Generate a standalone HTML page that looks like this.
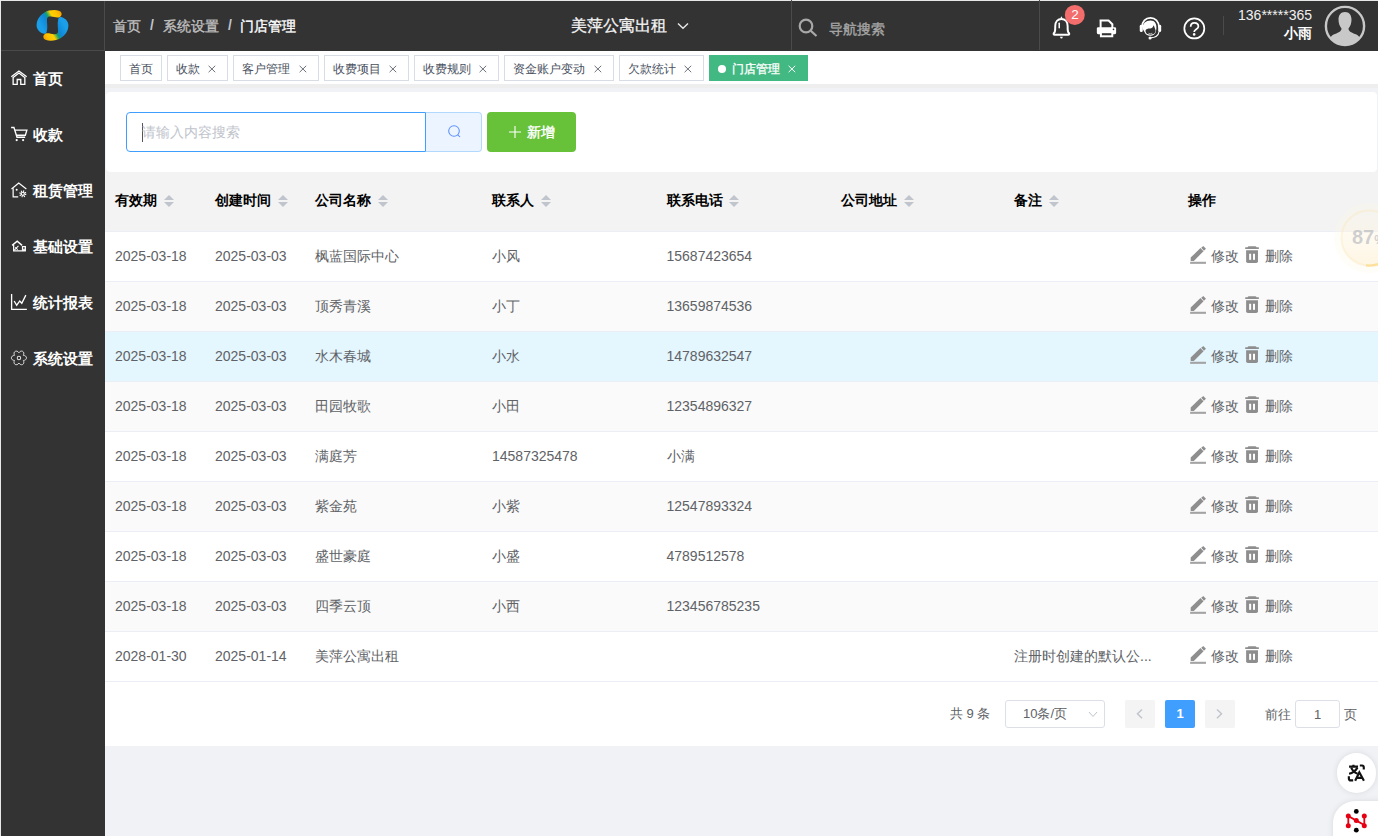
<!DOCTYPE html><html><head><meta charset="utf-8"><style>
*{margin:0;padding:0;box-sizing:border-box}
html,body{width:1378px;height:836px;overflow:hidden;background:#f0f2f5;font-family:"Liberation Sans",sans-serif;font-size:14px;color:#606266}
#f{position:absolute;left:0;top:0;width:1378px;height:836px;overflow:hidden}
.a{position:absolute;white-space:nowrap}
.t{position:absolute;white-space:nowrap;line-height:20px;height:20px}
svg{position:absolute;overflow:visible}
.tab{position:absolute;top:55px;height:26px;border:1px solid #d8dce5;background:#fff;color:#495060;font-size:12px;line-height:24px;white-space:nowrap}
.tab span{position:absolute;top:.75px;left:8px}
.th{position:absolute;color:#000;font-weight:bold;font-size:14px;white-space:nowrap;line-height:20px;top:190px}
.car{position:absolute;width:0;height:0;border:5px solid transparent}
.row{position:absolute;left:105px;width:1273px;height:50px;border-bottom:1px solid #ebeef5;background:#fff}
.row.s{background:#fafafa}
.row.h{background:#e4f6fe}
.td{position:absolute;top:14px;line-height:20px;white-space:nowrap;font-size:14px;color:#606266}
</style></head><body><div id="f">
<div class="a" style="left:0;top:0;width:105px;height:836px;background:#333"></div>
<div class="a" style="left:0;top:0;width:1378px;height:51px;background:#333"></div>
<div class="a" style="left:0;top:50px;width:105px;height:1px;background:#4a4a4a"></div>
<div class="a" style="left:104px;top:0;width:1px;height:50px;background:#4a4a4a"></div>
<div class="a" style="left:0;top:0;width:1378px;height:1px;background:#e8e8e8"></div>
<div class="a" style="left:0;top:0;width:1px;height:836px;background:#e8e8e8"></div>
<svg style="left:0;top:0" width="105" height="50" viewBox="0 0 105 50">
<defs>
<linearGradient id="ga" gradientUnits="userSpaceOnUse" x1="40" y1="24" x2="62" y2="12"><stop offset="0" stop-color="#1a9fe8"/><stop offset=".3" stop-color="#0f86d6"/><stop offset=".42" stop-color="#12a070"/><stop offset=".58" stop-color="#ffd000"/><stop offset=".8" stop-color="#fcc000"/><stop offset="1" stop-color="#f39800"/></linearGradient>
<linearGradient id="gb2" gradientUnits="userSpaceOnUse" x1="40" y1="24" x2="62" y2="12"><stop offset="0" stop-color="#0a62b8"/><stop offset=".3" stop-color="#1a9ce6"/><stop offset=".42" stop-color="#12a070"/><stop offset=".58" stop-color="#ffd000"/><stop offset=".8" stop-color="#fcc000"/><stop offset="1" stop-color="#f39800"/></linearGradient>
</defs>
<g id="hA"><path d="M44 33.8 C39 32.5 36.4 28.8 36.6 25 C36.8 20 39.5 15.5 44.5 12.5 C48.5 10 55.5 9.4 59.5 11 C62.2 12.2 62.3 15.6 60 16.9 C57.5 18.2 54 16.8 51 16.5 C49 16.3 47.3 16.8 47 18.7 C46.7 22 47.9 27 46.9 31 C46.5 33 45.6 34.1 44 33.8 Z" fill="url(#ga)"/></g>
<path transform="rotate(180 52.5 25.4)" d="M44 33.8 C39 32.5 36.4 28.8 36.6 25 C36.8 20 39.5 15.5 44.5 12.5 C48.5 10 55.5 9.4 59.5 11 C62.2 12.2 62.3 15.6 60 16.9 C57.5 18.2 54 16.8 51 16.5 C49 16.3 47.3 16.8 47 18.7 C46.7 22 47.9 27 46.9 31 C46.5 33 45.6 34.1 44 33.8 Z" fill="url(#ga)"/>
</svg>
<div class="t" style="left:32.6px;top:69px;color:#fff;font-size:15px;font-weight:bold">首页</div>
<div class="t" style="left:32.6px;top:125px;color:#fff;font-size:15px;font-weight:bold">收款</div>
<div class="t" style="left:32.6px;top:181px;color:#fff;font-size:15px;font-weight:bold">租赁管理</div>
<div class="t" style="left:32.6px;top:237px;color:#fff;font-size:15px;font-weight:bold">基础设置</div>
<div class="t" style="left:32.6px;top:293px;color:#fff;font-size:15px;font-weight:bold">统计报表</div>
<div class="t" style="left:32.6px;top:349px;color:#fff;font-size:15px;font-weight:bold">系统设置</div>
<svg style="left:5px;top:60px" width="30" height="85" viewBox="0 0 295 836" fill="none" stroke="#fff" stroke-width="13">
<path d="M62 165 L137 108 L213 165"/><path d="M80 172 L137 128 L194 172"/>
<path d="M80 168 V240 H120 V192 H155 V240 H195 V168"/>
<path d="M60 664 H88 L118 760 H198"/><path d="M96 690 H215 L200 740 H110"/>
<circle cx="115" cy="788" r="11" fill="#fff" stroke="none"/><circle cx="178" cy="788" r="11" fill="#fff" stroke="none"/>
</svg>
<svg style="left:5px;top:175px" width="30" height="85" viewBox="0 0 295 836" fill="none" stroke="#fff" stroke-width="12">
<path d="M64 137 L135 80 L210 137"/><path d="M80 130 V215 H130"/><circle cx="115" cy="145" r="10" fill="#fff" stroke="none"/>
<circle cx="175" cy="185" r="26" stroke-width="18" stroke-dasharray="10 10.4"/><circle cx="175" cy="185" r="15" stroke-width="11"/>
<path d="M70 692 L120 652 L168 692" stroke-width="14"/><path d="M85 688 V746 H205"/>
<path d="M92 738 L132 698 M100 712 L125 735" stroke-width="10"/>
<rect x="166" y="698" width="40" height="48" fill="#fff" stroke="none"/><rect x="180" y="708" width="12" height="22" fill="#333" stroke="none"/>
</svg>
<svg style="left:5px;top:290px" width="30" height="85" viewBox="0 0 295 836" fill="none" stroke="#fff" stroke-width="13">
<path d="M65 40 V190 H215"/><path d="M90 108 L115 150 L145 108 L165 130 L205 50" stroke-linejoin="miter"/>
<path d="M180.3 643.0 C221.6 643.7 221.6 692.3 180.3 693.0 C200.3 729.1 158.3 753.4 137.0 718.0 C115.7 753.4 73.7 729.1 93.7 693.0 C52.4 692.3 52.4 643.7 93.7 643.0 C73.7 606.9 115.7 582.6 137.0 618.0 C158.3 582.6 200.3 606.9 180.3 643.0 Z" stroke="#e0e0e0" stroke-width="9" stroke-linejoin="round"/><circle cx="137" cy="668" r="17" stroke="#e0e0e0" stroke-width="10"/>
</svg>
<div class="t" style="left:113px;top:15.5px;color:#bfbfbf;-webkit-text-stroke:.35px #bfbfbf">首页</div>
<div class="t" style="left:150px;top:15px;color:#c0c4cc;font-weight:bold">/</div>
<div class="t" style="left:163px;top:15.5px;color:#bfbfbf;-webkit-text-stroke:.35px #bfbfbf">系统设置</div>
<div class="t" style="left:228px;top:15px;color:#c0c4cc;font-weight:bold">/</div>
<div class="t" style="left:240px;top:15.5px;color:#fff;-webkit-text-stroke:.35px #fff">门店管理</div>
<div class="t" style="left:571px;top:15.5px;color:#f4f4f4;font-size:16px;-webkit-text-stroke:.3px #f4f4f4">美萍公寓出租</div>
<svg style="left:677px;top:22px" width="12" height="8" viewBox="0 0 12 8" fill="none" stroke="#e8e8e8" stroke-width="1.4"><path d="M1 1.5 L6 6.3 L11 1.5"/></svg>
<div class="a" style="left:791px;top:0;width:1px;height:50px;background:#4a4a4a"></div>
<svg style="left:798px;top:18px" width="20" height="19" viewBox="0 0 20 19" fill="none" stroke="#a8a8a8" stroke-width="2.2"><circle cx="8" cy="8" r="6.3"/><path d="M12.6 12.6 L18.5 18"/></svg>
<div class="t" style="left:829px;top:19px;color:#a6a6a6;-webkit-text-stroke:.35px #a6a6a6">导航搜索</div>
<div class="a" style="left:1039px;top:0;width:1px;height:50px;background:#4a4a4a"></div>
<svg style="left:1045px;top:3px" width="80" height="42" viewBox="0 0 1378 723">
<path d="M165 545 Q148 545 148 533 Q148 522 162 508 C178 490 176 470 176 400 C176 322 222 275 283 275 C344 275 390 322 390 400 C390 470 388 490 404 508 Q418 522 418 533 Q418 545 401 545 Z" fill="none" stroke="#fff" stroke-width="34" stroke-linejoin="round"/>
<path d="M283 228 L262 268 H304Z" fill="#fff"/>
<path d="M245 350 V425" stroke="#fff" stroke-width="26" stroke-linecap="round"/>
<path d="M258 580 H308 Q300 612 283 612 Q266 612 258 580Z" fill="#fff"/>
<circle cx="513" cy="205" r="172" fill="#f36d6d"/>
<path d="M940 300 H1095 L1160 365 V440 M958 300 V440" fill="none" stroke="#fff" stroke-width="34"/>
<rect x="893" y="418" width="332" height="118" rx="22" fill="#fff"/>
<circle cx="1180" cy="455" r="14" fill="#333"/>
<rect x="963" y="503" width="196" height="70" fill="#333" stroke="#fff" stroke-width="34"/>
</svg>
<div class="a" style="left:1065px;top:5px;width:20px;height:20px;color:#fff;font-size:13.5px;line-height:20px;text-align:center">2</div>
<svg style="left:1130px;top:10px" width="80" height="35" viewBox="0 0 1378 603">
<path d="M205 300 C205 195 270 135 352 135 C434 135 500 195 500 300" fill="none" stroke="#fff" stroke-width="30"/>
<path d="M215 320 C215 230 275 182 352 182 C430 182 460 240 455 320 L445 380 C430 420 395 445 352 445 C300 445 262 420 250 380Z" fill="#fff"/>
<path d="M268 350 C275 325 305 318 345 318 C375 318 395 305 405 262 C420 285 432 320 440 350 C445 395 410 425 352 425 C295 425 262 395 268 350Z" fill="#333"/>
<path d="M318 400 Q350 418 385 400" fill="none" stroke="#fff" stroke-width="10"/>
<rect x="168" y="255" width="52" height="125" rx="24" fill="#fff"/>
<rect x="485" y="255" width="52" height="125" rx="24" fill="#fff"/>
<path d="M500 375 C490 440 430 478 350 480" fill="none" stroke="#fff" stroke-width="20"/>
<circle cx="345" cy="482" r="26" fill="#fff"/>
<circle cx="1108" cy="318" r="172" fill="none" stroke="#fff" stroke-width="30"/>
<path d="M1045 290 C1045 245 1075 222 1110 222 C1150 222 1178 248 1178 285 C1178 330 1105 335 1105 380" fill="none" stroke="#fff" stroke-width="30"/>
<circle cx="1105" cy="420" r="22" fill="#fff"/>
</svg>
<div class="a" style="left:1223px;top:16px;width:1px;height:19px;background:#4a4a4a"></div>
<div class="t" style="right:66px;top:5px;color:#f0f0f0;font-size:14px;text-align:right">136*****365</div>
<div class="t" style="right:66px;top:23px;color:#fff;font-size:14px;font-weight:bold;text-align:right">小雨</div>
<svg style="left:1324px;top:5px" width="42" height="42" viewBox="0 0 42 42">
<defs><clipPath id="cp"><circle cx="21" cy="21" r="19.5"/></clipPath></defs>
<circle cx="21" cy="21" r="19.1" fill="none" stroke="#c8c8c8" stroke-width="2.4"/>
<g clip-path="url(#cp)" fill="#c8c8c8"><path d="M21 7 C25.5 7 27.5 10.5 27.5 14.5 C27.5 18 26.5 21 24.5 23.5 C24.5 26 27 27.5 31 29 C35 30.5 37 33 37 38 V42 H5 V38 C5 33 7 30.5 11 29 C15 27.5 17.5 26 17.5 23.5 C15.5 21 14.5 18 14.5 14.5 C14.5 10.5 16.5 7 21 7Z"/></g></svg>
<div class="a" style="left:105px;top:84px;width:1273px;height:4px;background:#eeeeee"></div>
<div class="a" style="left:105px;top:51px;width:1273px;height:33px;background:#fff"></div>
<div class="tab" style="left:120px;width:42px"><span>首页</span></div>
<div class="tab" style="left:167px;width:61px"><span>收款</span></div>
<svg style="left:207.5px;top:65px" width="8" height="8" viewBox="0 0 8 8" fill="none" stroke="#6b707b" stroke-width="1"><path d="M.6 .8 L7.2 7.2 M7.2 .8 L.6 7.2"/></svg>
<div class="tab" style="left:233px;width:86px"><span>客户管理</span></div>
<svg style="left:298.5px;top:65px" width="8" height="8" viewBox="0 0 8 8" fill="none" stroke="#6b707b" stroke-width="1"><path d="M.6 .8 L7.2 7.2 M7.2 .8 L.6 7.2"/></svg>
<div class="tab" style="left:324px;width:85px"><span>收费项目</span></div>
<svg style="left:388.5px;top:65px" width="8" height="8" viewBox="0 0 8 8" fill="none" stroke="#6b707b" stroke-width="1"><path d="M.6 .8 L7.2 7.2 M7.2 .8 L.6 7.2"/></svg>
<div class="tab" style="left:414px;width:85px"><span>收费规则</span></div>
<svg style="left:478.5px;top:65px" width="8" height="8" viewBox="0 0 8 8" fill="none" stroke="#6b707b" stroke-width="1"><path d="M.6 .8 L7.2 7.2 M7.2 .8 L.6 7.2"/></svg>
<div class="tab" style="left:504px;width:110px"><span>资金账户变动</span></div>
<svg style="left:593.5px;top:65px" width="8" height="8" viewBox="0 0 8 8" fill="none" stroke="#6b707b" stroke-width="1"><path d="M.6 .8 L7.2 7.2 M7.2 .8 L.6 7.2"/></svg>
<div class="tab" style="left:619px;width:85px"><span>欠款统计</span></div>
<svg style="left:683.5px;top:65px" width="8" height="8" viewBox="0 0 8 8" fill="none" stroke="#6b707b" stroke-width="1"><path d="M.6 .8 L7.2 7.2 M7.2 .8 L.6 7.2"/></svg>
<div class="tab" style="left:709px;width:99px;background:#42b983;border-color:#42b983;color:#fff"><span style="left:21.5px;-webkit-text-stroke:.3px #fff">门店管理</span></div>
<div class="a" style="left:718px;top:65px;width:8px;height:8px;border-radius:50%;background:#fff"></div>
<svg style="left:787.5px;top:65px" width="8" height="8" viewBox="0 0 8 8" fill="none" stroke="#fff" stroke-width="1"><path d="M.6 .8 L7.2 7.2 M7.2 .8 L.6 7.2"/></svg>
<div class="a" style="left:106px;top:92px;width:1271px;height:80px;background:#fff;border-radius:4px"></div>
<div class="a" style="left:126px;top:112px;width:300px;height:40px;border:1px solid #409eff;border-radius:4px 0 0 4px;background:#fff"></div>
<div class="a" style="left:142px;top:123px;width:1px;height:19px;background:#555"></div>
<div class="t" style="left:142px;top:122px;color:#c0c4cc;font-size:14px">请输入内容搜索</div>
<div class="a" style="left:425px;top:112px;width:57px;height:40px;border:1px solid #b3d8ff;border-left:1px solid #409eff;border-radius:0 4px 4px 0;background:#ecf5ff"></div>
<svg style="left:447px;top:124px" width="15" height="15" viewBox="0 0 15 15" fill="none" stroke="#5a8cff" stroke-width="1.05"><circle cx="7" cy="7" r="5.3"/><path d="M10.8 10.8 L13 13"/></svg>
<div class="a" style="left:487px;top:112px;width:89px;height:40px;border-radius:4px;background:#67c23a"></div>
<svg style="left:509px;top:126px" width="12" height="12" viewBox="0 0 12 12" fill="none" stroke="#fff" stroke-width="1.1"><path d="M6 0 V12 M0 6 H12"/></svg>
<div class="t" style="left:527px;top:122px;color:#fff;font-size:14px;-webkit-text-stroke:.4px #fff">新增</div>
<div class="a" style="left:105px;top:172px;width:1273px;height:60px;background:#f3f3f3;border-bottom:1px solid #ebeef5"></div>
<div class="th" style="left:115px">有效期</div>
<div class="car" style="left:163.5px;top:190px;border-bottom-color:#c0c4cc"></div>
<div class="car" style="left:163.5px;top:202px;border-top-color:#c0c4cc"></div>
<div class="th" style="left:215px">创建时间</div>
<div class="car" style="left:277.5px;top:190px;border-bottom-color:#c0c4cc"></div>
<div class="car" style="left:277.5px;top:202px;border-top-color:#c0c4cc"></div>
<div class="th" style="left:315px">公司名称</div>
<div class="car" style="left:377.5px;top:190px;border-bottom-color:#c0c4cc"></div>
<div class="car" style="left:377.5px;top:202px;border-top-color:#c0c4cc"></div>
<div class="th" style="left:492px">联系人</div>
<div class="car" style="left:540.5px;top:190px;border-bottom-color:#c0c4cc"></div>
<div class="car" style="left:540.5px;top:202px;border-top-color:#c0c4cc"></div>
<div class="th" style="left:666.5px">联系电话</div>
<div class="car" style="left:729.0px;top:190px;border-bottom-color:#c0c4cc"></div>
<div class="car" style="left:729.0px;top:202px;border-top-color:#c0c4cc"></div>
<div class="th" style="left:841px">公司地址</div>
<div class="car" style="left:903.5px;top:190px;border-bottom-color:#c0c4cc"></div>
<div class="car" style="left:903.5px;top:202px;border-top-color:#c0c4cc"></div>
<div class="th" style="left:1014px">备注</div>
<div class="car" style="left:1048.5px;top:190px;border-bottom-color:#c0c4cc"></div>
<div class="car" style="left:1048.5px;top:202px;border-top-color:#c0c4cc"></div>
<div class="th" style="left:1188px">操作</div>
<div class="row" style="top:232px"></div>
<div class="td" style="left:115px;top:246px">2025-03-18</div>
<div class="td" style="left:215px;top:246px">2025-03-03</div>
<div class="td" style="left:315px;top:246px">枫蓝国际中心</div>
<div class="td" style="left:492px;top:246px">小风</div>
<div class="td" style="left:666.5px;top:246px">15687423654</div>
<svg style="left:1186px;top:243px" width="76" height="25" viewBox="0 0 1378 453">
<path d="M85 325 L85 265 L262 92 L318 148 L142 325 Z" fill="#8e8e8e"/><path d="M276 88 L314 54 L362 106 L326 142 Z" fill="#8e8e8e"/>
<rect x="75" y="340" width="287" height="38" fill="#a3a3a3"/>
<path d="M1118 75 Q1120 58 1140 58 H1255 Q1275 58 1278 75 H1310 Q1325 75 1325 92 Q1325 110 1310 110 H1085 Q1070 110 1070 92 Q1070 75 1085 75Z" fill="#8e8e8e"/>
<path d="M1090 130 H1305 V330 Q1305 362 1273 362 H1122 Q1090 362 1090 330Z" fill="#8e8e8e"/>
<rect x="1145" y="195" width="36" height="110" fill="#fff"/><rect x="1215" y="195" width="36" height="110" fill="#fff"/>
</svg>
<div class="td" style="left:1211px;top:246px">修改</div>
<div class="td" style="left:1265px;top:246px">删除</div>
<div class="row s" style="top:282px"></div>
<div class="td" style="left:115px;top:296px">2025-03-18</div>
<div class="td" style="left:215px;top:296px">2025-03-03</div>
<div class="td" style="left:315px;top:296px">顶秀青溪</div>
<div class="td" style="left:492px;top:296px">小丁</div>
<div class="td" style="left:666.5px;top:296px">13659874536</div>
<svg style="left:1186px;top:293px" width="76" height="25" viewBox="0 0 1378 453">
<path d="M85 325 L85 265 L262 92 L318 148 L142 325 Z" fill="#8e8e8e"/><path d="M276 88 L314 54 L362 106 L326 142 Z" fill="#8e8e8e"/>
<rect x="75" y="340" width="287" height="38" fill="#a3a3a3"/>
<path d="M1118 75 Q1120 58 1140 58 H1255 Q1275 58 1278 75 H1310 Q1325 75 1325 92 Q1325 110 1310 110 H1085 Q1070 110 1070 92 Q1070 75 1085 75Z" fill="#8e8e8e"/>
<path d="M1090 130 H1305 V330 Q1305 362 1273 362 H1122 Q1090 362 1090 330Z" fill="#8e8e8e"/>
<rect x="1145" y="195" width="36" height="110" fill="#fff"/><rect x="1215" y="195" width="36" height="110" fill="#fff"/>
</svg>
<div class="td" style="left:1211px;top:296px">修改</div>
<div class="td" style="left:1265px;top:296px">删除</div>
<div class="row h" style="top:332px"></div>
<div class="td" style="left:115px;top:346px">2025-03-18</div>
<div class="td" style="left:215px;top:346px">2025-03-03</div>
<div class="td" style="left:315px;top:346px">水木春城</div>
<div class="td" style="left:492px;top:346px">小水</div>
<div class="td" style="left:666.5px;top:346px">14789632547</div>
<svg style="left:1186px;top:343px" width="76" height="25" viewBox="0 0 1378 453">
<path d="M85 325 L85 265 L262 92 L318 148 L142 325 Z" fill="#8e8e8e"/><path d="M276 88 L314 54 L362 106 L326 142 Z" fill="#8e8e8e"/>
<rect x="75" y="340" width="287" height="38" fill="#a3a3a3"/>
<path d="M1118 75 Q1120 58 1140 58 H1255 Q1275 58 1278 75 H1310 Q1325 75 1325 92 Q1325 110 1310 110 H1085 Q1070 110 1070 92 Q1070 75 1085 75Z" fill="#8e8e8e"/>
<path d="M1090 130 H1305 V330 Q1305 362 1273 362 H1122 Q1090 362 1090 330Z" fill="#8e8e8e"/>
<rect x="1145" y="195" width="36" height="110" fill="#fff"/><rect x="1215" y="195" width="36" height="110" fill="#fff"/>
</svg>
<div class="td" style="left:1211px;top:346px">修改</div>
<div class="td" style="left:1265px;top:346px">删除</div>
<div class="row s" style="top:382px"></div>
<div class="td" style="left:115px;top:396px">2025-03-18</div>
<div class="td" style="left:215px;top:396px">2025-03-03</div>
<div class="td" style="left:315px;top:396px">田园牧歌</div>
<div class="td" style="left:492px;top:396px">小田</div>
<div class="td" style="left:666.5px;top:396px">12354896327</div>
<svg style="left:1186px;top:393px" width="76" height="25" viewBox="0 0 1378 453">
<path d="M85 325 L85 265 L262 92 L318 148 L142 325 Z" fill="#8e8e8e"/><path d="M276 88 L314 54 L362 106 L326 142 Z" fill="#8e8e8e"/>
<rect x="75" y="340" width="287" height="38" fill="#a3a3a3"/>
<path d="M1118 75 Q1120 58 1140 58 H1255 Q1275 58 1278 75 H1310 Q1325 75 1325 92 Q1325 110 1310 110 H1085 Q1070 110 1070 92 Q1070 75 1085 75Z" fill="#8e8e8e"/>
<path d="M1090 130 H1305 V330 Q1305 362 1273 362 H1122 Q1090 362 1090 330Z" fill="#8e8e8e"/>
<rect x="1145" y="195" width="36" height="110" fill="#fff"/><rect x="1215" y="195" width="36" height="110" fill="#fff"/>
</svg>
<div class="td" style="left:1211px;top:396px">修改</div>
<div class="td" style="left:1265px;top:396px">删除</div>
<div class="row" style="top:432px"></div>
<div class="td" style="left:115px;top:446px">2025-03-18</div>
<div class="td" style="left:215px;top:446px">2025-03-03</div>
<div class="td" style="left:315px;top:446px">满庭芳</div>
<div class="td" style="left:492px;top:446px">14587325478</div>
<div class="td" style="left:666.5px;top:446px">小满</div>
<svg style="left:1186px;top:443px" width="76" height="25" viewBox="0 0 1378 453">
<path d="M85 325 L85 265 L262 92 L318 148 L142 325 Z" fill="#8e8e8e"/><path d="M276 88 L314 54 L362 106 L326 142 Z" fill="#8e8e8e"/>
<rect x="75" y="340" width="287" height="38" fill="#a3a3a3"/>
<path d="M1118 75 Q1120 58 1140 58 H1255 Q1275 58 1278 75 H1310 Q1325 75 1325 92 Q1325 110 1310 110 H1085 Q1070 110 1070 92 Q1070 75 1085 75Z" fill="#8e8e8e"/>
<path d="M1090 130 H1305 V330 Q1305 362 1273 362 H1122 Q1090 362 1090 330Z" fill="#8e8e8e"/>
<rect x="1145" y="195" width="36" height="110" fill="#fff"/><rect x="1215" y="195" width="36" height="110" fill="#fff"/>
</svg>
<div class="td" style="left:1211px;top:446px">修改</div>
<div class="td" style="left:1265px;top:446px">删除</div>
<div class="row s" style="top:482px"></div>
<div class="td" style="left:115px;top:496px">2025-03-18</div>
<div class="td" style="left:215px;top:496px">2025-03-03</div>
<div class="td" style="left:315px;top:496px">紫金苑</div>
<div class="td" style="left:492px;top:496px">小紫</div>
<div class="td" style="left:666.5px;top:496px">12547893324</div>
<svg style="left:1186px;top:493px" width="76" height="25" viewBox="0 0 1378 453">
<path d="M85 325 L85 265 L262 92 L318 148 L142 325 Z" fill="#8e8e8e"/><path d="M276 88 L314 54 L362 106 L326 142 Z" fill="#8e8e8e"/>
<rect x="75" y="340" width="287" height="38" fill="#a3a3a3"/>
<path d="M1118 75 Q1120 58 1140 58 H1255 Q1275 58 1278 75 H1310 Q1325 75 1325 92 Q1325 110 1310 110 H1085 Q1070 110 1070 92 Q1070 75 1085 75Z" fill="#8e8e8e"/>
<path d="M1090 130 H1305 V330 Q1305 362 1273 362 H1122 Q1090 362 1090 330Z" fill="#8e8e8e"/>
<rect x="1145" y="195" width="36" height="110" fill="#fff"/><rect x="1215" y="195" width="36" height="110" fill="#fff"/>
</svg>
<div class="td" style="left:1211px;top:496px">修改</div>
<div class="td" style="left:1265px;top:496px">删除</div>
<div class="row" style="top:532px"></div>
<div class="td" style="left:115px;top:546px">2025-03-18</div>
<div class="td" style="left:215px;top:546px">2025-03-03</div>
<div class="td" style="left:315px;top:546px">盛世豪庭</div>
<div class="td" style="left:492px;top:546px">小盛</div>
<div class="td" style="left:666.5px;top:546px">4789512578</div>
<svg style="left:1186px;top:543px" width="76" height="25" viewBox="0 0 1378 453">
<path d="M85 325 L85 265 L262 92 L318 148 L142 325 Z" fill="#8e8e8e"/><path d="M276 88 L314 54 L362 106 L326 142 Z" fill="#8e8e8e"/>
<rect x="75" y="340" width="287" height="38" fill="#a3a3a3"/>
<path d="M1118 75 Q1120 58 1140 58 H1255 Q1275 58 1278 75 H1310 Q1325 75 1325 92 Q1325 110 1310 110 H1085 Q1070 110 1070 92 Q1070 75 1085 75Z" fill="#8e8e8e"/>
<path d="M1090 130 H1305 V330 Q1305 362 1273 362 H1122 Q1090 362 1090 330Z" fill="#8e8e8e"/>
<rect x="1145" y="195" width="36" height="110" fill="#fff"/><rect x="1215" y="195" width="36" height="110" fill="#fff"/>
</svg>
<div class="td" style="left:1211px;top:546px">修改</div>
<div class="td" style="left:1265px;top:546px">删除</div>
<div class="row s" style="top:582px"></div>
<div class="td" style="left:115px;top:596px">2025-03-18</div>
<div class="td" style="left:215px;top:596px">2025-03-03</div>
<div class="td" style="left:315px;top:596px">四季云顶</div>
<div class="td" style="left:492px;top:596px">小西</div>
<div class="td" style="left:666.5px;top:596px">123456785235</div>
<svg style="left:1186px;top:593px" width="76" height="25" viewBox="0 0 1378 453">
<path d="M85 325 L85 265 L262 92 L318 148 L142 325 Z" fill="#8e8e8e"/><path d="M276 88 L314 54 L362 106 L326 142 Z" fill="#8e8e8e"/>
<rect x="75" y="340" width="287" height="38" fill="#a3a3a3"/>
<path d="M1118 75 Q1120 58 1140 58 H1255 Q1275 58 1278 75 H1310 Q1325 75 1325 92 Q1325 110 1310 110 H1085 Q1070 110 1070 92 Q1070 75 1085 75Z" fill="#8e8e8e"/>
<path d="M1090 130 H1305 V330 Q1305 362 1273 362 H1122 Q1090 362 1090 330Z" fill="#8e8e8e"/>
<rect x="1145" y="195" width="36" height="110" fill="#fff"/><rect x="1215" y="195" width="36" height="110" fill="#fff"/>
</svg>
<div class="td" style="left:1211px;top:596px">修改</div>
<div class="td" style="left:1265px;top:596px">删除</div>
<div class="row" style="top:632px"></div>
<div class="td" style="left:115px;top:646px">2028-01-30</div>
<div class="td" style="left:215px;top:646px">2025-01-14</div>
<div class="td" style="left:315px;top:646px">美萍公寓出租</div>
<div class="td" style="left:1014px;top:646px">注册时创建的默认公...</div>
<svg style="left:1186px;top:643px" width="76" height="25" viewBox="0 0 1378 453">
<path d="M85 325 L85 265 L262 92 L318 148 L142 325 Z" fill="#8e8e8e"/><path d="M276 88 L314 54 L362 106 L326 142 Z" fill="#8e8e8e"/>
<rect x="75" y="340" width="287" height="38" fill="#a3a3a3"/>
<path d="M1118 75 Q1120 58 1140 58 H1255 Q1275 58 1278 75 H1310 Q1325 75 1325 92 Q1325 110 1310 110 H1085 Q1070 110 1070 92 Q1070 75 1085 75Z" fill="#8e8e8e"/>
<path d="M1090 130 H1305 V330 Q1305 362 1273 362 H1122 Q1090 362 1090 330Z" fill="#8e8e8e"/>
<rect x="1145" y="195" width="36" height="110" fill="#fff"/><rect x="1215" y="195" width="36" height="110" fill="#fff"/>
</svg>
<div class="td" style="left:1211px;top:646px">修改</div>
<div class="td" style="left:1265px;top:646px">删除</div>
<svg style="left:1320px;top:190px" width="58" height="100" viewBox="0 0 58 100">
<defs><linearGradient id="g87" x1="0" y1="0" x2="0" y2="1"><stop offset="0" stop-color="rgba(255,245,225,0)"/><stop offset="1" stop-color="rgba(253,240,210,.55)"/></linearGradient></defs>
<circle cx="49" cy="48" r="35" fill="rgba(255,250,232,.3)"/>
<circle cx="49" cy="48" r="27.5" fill="url(#g87)" stroke="rgba(250,230,180,.35)" stroke-width="2"/>
<path d="M47 75.5 A27.5 27.5 0 0 0 60 73.5" fill="none" stroke="rgba(252,215,130,.7)" stroke-width="2.4" stroke-linecap="round"/>
</svg>
<div class="t" style="left:1352px;top:225.5px;color:rgba(175,178,185,.6);font-size:20px;font-weight:bold;line-height:22px;height:22px">87<span style="font-size:12px">%</span></div>
<div class="a" style="left:105px;top:682px;width:1273px;height:64px;background:#fff"></div>
<div class="t" style="left:950px;top:704px;font-size:13px;color:#606266">共 9 条</div>
<div class="a" style="left:1005px;top:700px;width:100px;height:28px;border:1px solid #dcdfe6;border-radius:3px;background:#fff"></div>
<div class="t" style="left:1023px;top:704px;font-size:13px;color:#606266">10条/页</div>
<svg style="left:1088px;top:711px" width="10" height="7" viewBox="0 0 10 7" fill="none" stroke="#c0c4cc" stroke-width="1"><path d="M1 1 L5 5.5 L9 1"/></svg>
<div class="a" style="left:1125px;top:700px;width:30px;height:28px;border-radius:2px;background:#f4f4f5"></div>
<svg style="left:1136px;top:709px" width="7" height="10" viewBox="0 0 7 10" fill="none" stroke="#c0c4cc" stroke-width="1.5"><path d="M6 0.5 L1.5 4.8 L6 9.2"/></svg>
<div class="a" style="left:1165px;top:700px;width:30px;height:28px;border-radius:2px;background:#409eff;color:#fff;font-weight:bold;font-size:13px;line-height:28px;text-align:center">1</div>
<div class="a" style="left:1205px;top:700px;width:30px;height:28px;border-radius:2px;background:#f4f4f5"></div>
<svg style="left:1216px;top:709px" width="7" height="10" viewBox="0 0 7 10" fill="none" stroke="#c0c4cc" stroke-width="1.5"><path d="M1 0.5 L5.5 4.8 L1 9.2"/></svg>
<div class="t" style="left:1265px;top:705px;font-size:13px;color:#606266">前往</div>
<div class="a" style="left:1295px;top:700px;width:45px;height:28px;border:1px solid #dcdfe6;border-radius:3px;background:#fff;text-align:center;line-height:28px;font-size:13px;color:#606266">1</div>
<div class="t" style="left:1344px;top:705px;font-size:13px;color:#606266">页</div>
<div class="a" style="left:1336.5px;top:753px;width:39.5px;height:39.5px;border-radius:50%;background:#fff;box-shadow:0 0 6px rgba(0,0,0,.1)"></div>
<svg style="left:1320px;top:740px" width="58" height="60" viewBox="0 0 808 836" fill="none" stroke="#111" stroke-width="30">
<path d="M405 372 H530 M466 345 V372"/><path d="M435 385 Q465 455 525 470 M522 385 Q480 455 405 470"/>
<path d="M402 505 V535 Q402 563 432 563 H462"/><path d="M555 355 H585 Q610 355 610 382 V412"/>
<path d="M490 568 L548 450 L612 568 M515 528 H590"/></svg>
<div class="a" style="left:1332.5px;top:800.5px;width:90px;height:80px;border-radius:22px;background:#fff;box-shadow:0 0 6px rgba(0,0,0,.1)"></div>
<svg style="left:1344px;top:806px" width="24" height="26" viewBox="0 0 24 26">
<path d="M4.3 10 V19 M4.3 10 L12.3 14.6 L20.3 19 M20.3 10 V19" fill="none" stroke="#e60012" stroke-width="1.8"/>
<circle cx="4.3" cy="10" r="2.5" fill="#e60012"/><circle cx="20.3" cy="10" r="2.5" fill="#e60012"/><circle cx="12.3" cy="14.6" r="2.5" fill="#e60012"/>
<circle cx="4.3" cy="19.7" r="2.5" fill="#e60012"/><circle cx="20.3" cy="19.7" r="2.5" fill="#e60012"/>
<circle cx="12.3" cy="5.4" r="2.4" fill="#000"/><circle cx="12.3" cy="24.2" r="2.4" fill="#000"/></svg>
</div></body></html>
